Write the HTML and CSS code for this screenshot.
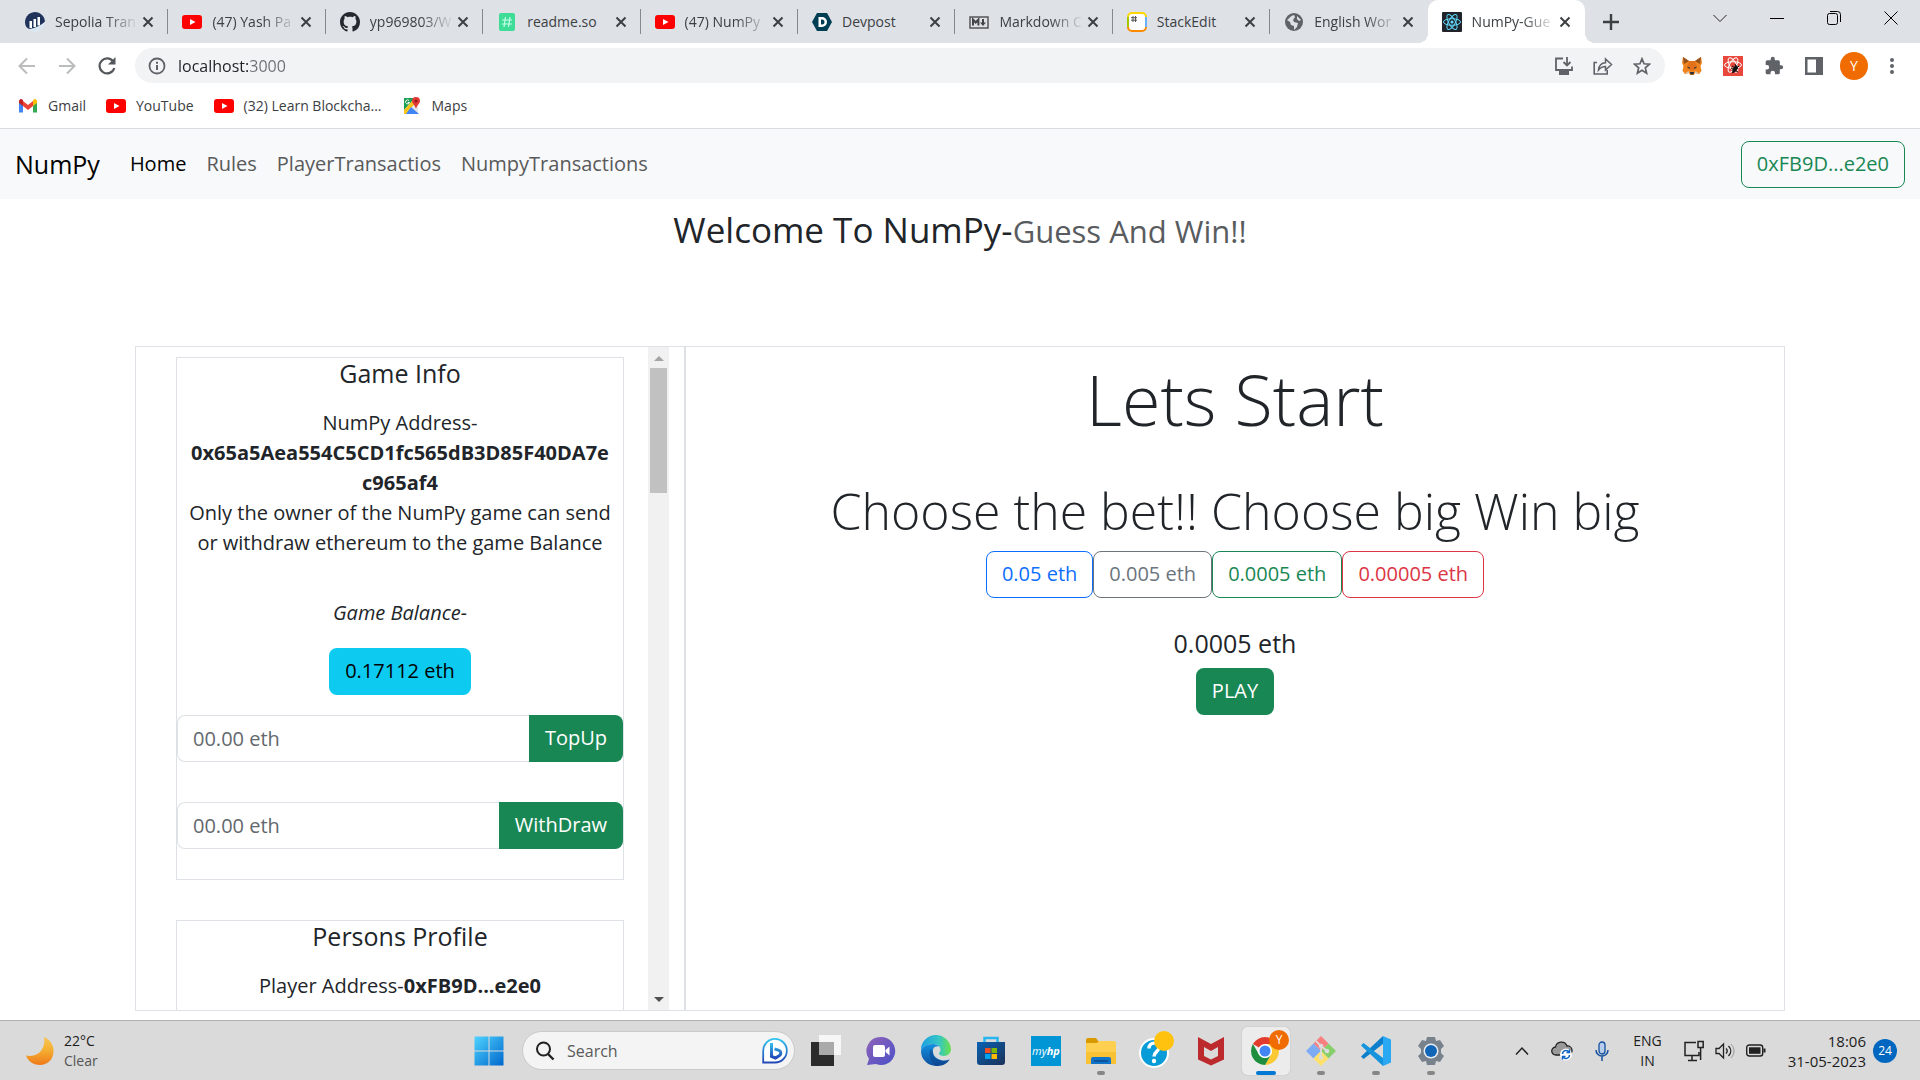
FILE: index.html
```html
<!DOCTYPE html>
<html lang="en">
<head>
  <meta charset="UTF-8">
  <meta name="viewport" content="width=device-width, initial-scale=1">
  <title>NumPy-Guess And Win</title>
  <link rel="stylesheet" href="styles.css">
</head>
<body>

  <!-- shared symbols -->
  <svg class="sprite" aria-hidden="true">
    <symbol id="i-close" viewBox="0 0 12 12"><path d="M1.5 1.5l9 9M10.5 1.5l-9 9" stroke="#3c4043" stroke-width="2" fill="none"/></symbol>
    <symbol id="i-youtube" viewBox="0 0 20 20"><rect y="3" width="20" height="14" rx="3" fill="#f00"/><path d="M8 7l5.500 3L8 13z" fill="#fff"/></symbol>
    <symbol id="i-chrome-y" viewBox="0 0 34 34">
      <path d="M16 17L3.900 10A14 14 0 0 1 28.100 10L16 10z" fill="#e33b2e"/>
      <path d="M28.100 10A14 14 0 0 1 16 31L22 20.500A7 7 0 0 0 16 10z" fill="#fcc934"/>
      <path d="M3.900 10A14 14 0 0 0 16 31L22 20.500A7 7 0 0 1 10 20.500z" fill="#1e8e3e"/>
      <circle cx="16" cy="17" r="7" fill="#fff"/><circle cx="16" cy="17" r="5.500" fill="#4285f4"/>
    </symbol>
  </svg>

  <header class="browser">
    <div class="tabstrip">
      <nav class="tabs" aria-label="Tabs">
        <div class="tab">
          <svg class="favicon" viewBox="0 0 20 20"><circle cx="10" cy="10" r="10" fill="#dbe8f2"/><path d="M1.200 14.800A10 10 0 1 1 20 9.500Q14 15.500 4.500 17Q2.500 16.500 1.200 14.800z" fill="#21325b"/><path d="M4.500 9h2.500v7H4.500zM8.500 7h2.500v8H8.500zM12.500 5H15v8.500h-2.500z" fill="#fff"/></svg>
          <a class="tab-title" href="#">Sepolia Tran</a>
          <button class="tab-close" aria-label="Close tab"><svg><use href="#i-close"/></svg></button>
        </div>
        <div class="tab">
          <svg class="favicon"><use href="#i-youtube"/></svg>
          <a class="tab-title" href="#">(47) Yash Pa</a>
          <button class="tab-close" aria-label="Close tab"><svg><use href="#i-close"/></svg></button>
        </div>
        <div class="tab">
          <svg class="favicon" viewBox="0 0 16 16"><path fill="#24292f" d="M8 0C3.580 0 0 3.580 0 8c0 3.540 2.290 6.530 5.470 7.590.4.070.55-.17.55-.38 0-.19-.01-.82-.01-1.490-2.010.37-2.530-.49-2.690-.94-.09-.23-.48-.94-.82-1.130-.28-.15-.68-.52-.01-.53.63-.01 1.080.58 1.230.82.72 1.210 1.870.87 2.330.66.07-.52.28-.87.51-1.070-1.780-.2-3.640-.89-3.640-3.950 0-.87.31-1.590.82-2.150-.08-.2-.36-1.020.08-2.120 0 0 .67-.21 2.200.82.64-.18 1.320-.27 2-.27s1.360.09 2 .27c1.530-1.040 2.200-.82 2.200-.82.44 1.100.16 1.920.08 2.120.51.56.82 1.270.82 2.150 0 3.070-1.870 3.750-3.650 3.950.29.25.54.73.54 1.480 0 1.070-.01 1.930-.01 2.200 0 .21.15.46.55.38A8.010 8.010 0 0 0 16 8c0-4.420-3.580-8-8-8z"/></svg>
          <a class="tab-title" href="#">yp969803/W</a>
          <button class="tab-close" aria-label="Close tab"><svg><use href="#i-close"/></svg></button>
        </div>
        <div class="tab">
          <svg class="favicon" viewBox="0 0 20 20"><rect x="2" y="1" width="16" height="18" rx="2" fill="#3ddc97"/><path d="M8.500 5L7 15M13 5l-1.500 10M5 8h10M5 12h10" stroke="#c8ffe9" stroke-width="1.200"/></svg>
          <a class="tab-title short" href="#">readme.so</a>
          <button class="tab-close" aria-label="Close tab"><svg><use href="#i-close"/></svg></button>
        </div>
        <div class="tab">
          <svg class="favicon"><use href="#i-youtube"/></svg>
          <a class="tab-title" href="#">(47) NumPy</a>
          <button class="tab-close" aria-label="Close tab"><svg><use href="#i-close"/></svg></button>
        </div>
        <div class="tab">
          <svg class="favicon" viewBox="0 0 20 20"><path d="M5 1h10l5 9-5 9H5l-5-9z" fill="#003e54"/><path d="M6.500 5H10a5 5 0 0 1 0 10H6.500zM9 7.500v5h1a2.500 2.500 0 0 0 0-5z" fill="#fff" fill-rule="evenodd"/></svg>
          <a class="tab-title short" href="#">Devpost</a>
          <button class="tab-close" aria-label="Close tab"><svg><use href="#i-close"/></svg></button>
        </div>
        <div class="tab">
          <svg class="favicon" viewBox="0 0 20 20"><rect x="1" y="5" width="18" height="11" fill="none" stroke="#555" stroke-width="1.500"/><path d="M4 13.500V7.500l2.700 3 2.700-3v6M14 7v5" stroke="#444" stroke-width="2" fill="none"/><path d="M11 10.500h6l-3 3.500z" fill="#444"/></svg>
          <a class="tab-title" href="#">Markdown C</a>
          <button class="tab-close" aria-label="Close tab"><svg><use href="#i-close"/></svg></button>
        </div>
        <div class="tab">
          <svg class="favicon" viewBox="0 0 20 20"><rect x="1" y="1" width="18" height="18" rx="4" fill="#fff"/><path d="M1 15V5" stroke="#a5c700" stroke-width="2"/><path d="M1 5a4 4 0 0 1 4-4h10a4 4 0 0 1 4 4" fill="none" stroke="#ffd700" stroke-width="2"/><path d="M19 5v10" stroke="#69b0ff" stroke-width="2"/><path d="M19 15a4 4 0 0 1-4 4H5a4 4 0 0 1-4-4" fill="none" stroke="#ff8a00" stroke-width="2"/><path d="M6 4v6M8.500 4v6M4 5.700h6M4 8.200h6" stroke="#555"/></svg>
          <a class="tab-title short" href="#">StackEdit</a>
          <button class="tab-close" aria-label="Close tab"><svg><use href="#i-close"/></svg></button>
        </div>
        <div class="tab tab-last">
          <svg class="favicon" viewBox="0 0 20 20"><circle cx="10" cy="10" r="9" fill="#5f6368"/><path d="M3 8c2-1 3-4 7-5l1 2-2 3 1 2 4 1-1 4-3 3v-4l-3-1-1-3z" fill="#dee1e6"/><path d="M13 4l4 4-2 1-2-2z" fill="#dee1e6"/></svg>
          <a class="tab-title" href="#">English Wor</a>
          <button class="tab-close" aria-label="Close tab"><svg><use href="#i-close"/></svg></button>
        </div>
        <div class="tab tab-active">
          <svg class="favicon" viewBox="0 0 20 20"><rect width="20" height="20" rx="1" fill="#20232a"/><g fill="none" stroke="#61dafb"><ellipse cx="10" cy="10" rx="8.500" ry="3.300"/><ellipse cx="10" cy="10" rx="8.500" ry="3.300" transform="rotate(60 10 10)"/><ellipse cx="10" cy="10" rx="8.500" ry="3.300" transform="rotate(120 10 10)"/></g><circle cx="10" cy="10" r="1.600" fill="#61dafb"/></svg>
          <a class="tab-title" href="#">NumPy-Gue</a>
          <button class="tab-close" aria-label="Close tab"><svg><use href="#i-close"/></svg></button>
        </div>
      </nav>
      <button class="icon-btn new-tab" aria-label="New tab"><svg width="16" height="16" viewBox="0 0 16 16"><path d="M8 0v16M0 8h16" stroke="#3c4043" stroke-width="2.400"/></svg></button>
      <div class="window-controls">
        <button class="icon-btn" aria-label="Search tabs"><svg width="16" height="16" viewBox="0 0 16 16"><path d="M1.500 5L8 11.500 14.500 5" fill="none" stroke="#222"/></svg></button>
        <button class="icon-btn" aria-label="Minimize"><svg width="14" height="14" viewBox="0 0 14 14"><path d="M0 7.500h14" stroke="#000"/></svg></button>
        <button class="icon-btn" aria-label="Restore"><svg width="14" height="14" viewBox="0 0 14 14"><rect x=".5" y="2.500" width="10" height="11" rx="2" fill="none" stroke="#000"/><path d="M3 .5h7.500a3 3 0 0 1 3 3V11" fill="none" stroke="#000"/></svg></button>
        <button class="icon-btn" aria-label="Close window"><svg width="14" height="14" viewBox="0 0 14 14"><path d="M.5.5l13 13M13.500.5l-13 13" stroke="#000"/></svg></button>
      </div>
    </div>

    <div class="toolbar">
      <button class="icon-btn" aria-label="Back"><svg width="18" height="18" viewBox="0 0 18 18"><path d="M17 9H2M9 1.500L1.500 9 9 16.500" fill="none" stroke="#babcbe" stroke-width="2"/></svg></button>
      <button class="icon-btn" aria-label="Forward"><svg width="18" height="18" viewBox="0 0 18 18"><path d="M1 9h15M9 1.500L16.500 9 9 16.500" fill="none" stroke="#babcbe" stroke-width="2"/></svg></button>
      <button class="icon-btn" aria-label="Reload"><svg width="18" height="18" viewBox="0 0 18 18"><path d="M15.500 5A7.500 7.500 0 1 0 16.300 11" fill="none" stroke="#55585c" stroke-width="2.200"/><path d="M17.500 0v7.500H10z" fill="#55585c"/></svg></button>
      <div class="omnibox">
        <svg width="18" height="18" viewBox="0 0 18 18"><circle cx="9" cy="9" r="7.500" fill="none" stroke="#5f6368" stroke-width="1.800"/><path d="M9 8v5M9 4.700v2" stroke="#5f6368" stroke-width="2"/></svg>
        <input class="url" type="text" aria-label="Address" value="localhost:3000">
        <button class="icon-btn" aria-label="Install app"><svg width="18" height="20" viewBox="0 0 18 20"><path d="M8 2.500H1V14h16v-3.500" fill="none" stroke="#5f6368" stroke-width="1.800"/><path d="M4 15h10v4H4z" fill="#5f6368"/><path d="M12 1v8.500M8.500 6l3.500 3.500L15.500 6" fill="none" stroke="#5f6368" stroke-width="1.800"/></svg></button>
        <button class="icon-btn" aria-label="Share"><svg width="20" height="18" viewBox="0 0 20 18"><path d="M4 5.500H1.200V17h13v-4" fill="none" stroke="#5f6368" stroke-width="1.600"/><path d="M5.500 13C6 8.500 8.500 6 12.500 5.800V2L18.500 7.500 12.500 13V9.500C9.500 9.500 7.500 10.500 5.500 13z" fill="none" stroke="#5f6368" stroke-width="1.500"/></svg></button>
        <button class="icon-btn" aria-label="Bookmark this page"><svg width="18" height="18" viewBox="0 0 20 20"><path d="M10 2l2.300 5.500 6 .5-4.600 4 1.400 6L10 14.800 4.900 18l1.400-6L1.700 8l6-.5z" fill="none" stroke="#5f6368" stroke-width="1.900"/></svg></button>
      </div>
      <div class="extensions">
        <button class="icon-btn" aria-label="MetaMask"><svg width="20" height="20" viewBox="0 0 20 20"><path d="M1 1l6 4h6l6-4 1 6-1.500 3L19.500 15 17 18l-4-1-1 2H8l-1-2-4 1-2.500-3L1.500 10 0 7z" fill="#f0851f"/><path d="M1 1l6 4-5 3zM19 1l-6 4 5 3z" fill="#92501f"/><path d="M7 5h6l2 7-5 3-5-3z" fill="#e2711a"/><path d="M4.500 10.500l3.500 1-.5 1.500zM15.500 10.500l-3.500 1 .5 1.500z" fill="#233447"/><path d="M8 16h4l-.5 2.500h-3z" fill="#2a3038"/><path d="M3 17l4-2v2zM17 17l-4-2v2z" fill="#d7c1b3"/></svg></button>
        <button class="icon-btn" aria-label="React Developer Tools"><svg width="20" height="20" viewBox="0 0 20 20"><rect width="20" height="20" fill="#e8473c"/><g fill="none" stroke="#fff"><ellipse cx="10" cy="9" rx="8.500" ry="3.300"/><ellipse cx="10" cy="9" rx="8" ry="3.300" transform="rotate(60 10 9)"/><ellipse cx="10" cy="9" rx="8" ry="3.300" transform="rotate(120 10 9)"/></g><ellipse cx="12" cy="13" rx="2" ry="4" transform="rotate(30 12 13)" fill="#111"/><path d="M8 12l7 4M9 17l6-5M12 8l1 3M9 10l3 2M16 10l-2 2" stroke="#111"/></svg></button>
        <button class="icon-btn" aria-label="Extensions"><svg width="20" height="20" viewBox="0 0 24 24"><path d="M20.500 11H19V7a2 2 0 0 0-2-2h-4V3.500a2.500 2.500 0 0 0-5 0V5H4a2 2 0 0 0-2 2v3.800h1.500a2.700 2.700 0 0 1 0 5.400H2V20a2 2 0 0 0 2 2h3.800v-1.500a2.700 2.700 0 0 1 5.400 0V22H17a2 2 0 0 0 2-2v-4h1.500a2.500 2.500 0 0 0 0-5z" fill="#5f6368"/></svg></button>
        <button class="icon-btn" aria-label="Side panel"><svg width="18" height="18" viewBox="0 0 18 18"><path d="M0 0h18v18H0zM2.500 2.500v13H11v-13z" fill="#5f6368" fill-rule="evenodd"/></svg></button>
        <button class="avatar">Y</button>
        <button class="icon-btn" aria-label="Menu"><svg width="4" height="16" viewBox="0 0 4 16"><g fill="#5f6368"><circle cx="2" cy="2" r="2"/><circle cx="2" cy="8" r="2"/><circle cx="2" cy="14" r="2"/></g></svg></button>
      </div>
    </div>

    <div class="bookmarks">
      <a href="#"><svg class="favicon" viewBox="0 0 20 20"><path d="M1 5v11.500h4V8z" fill="#4285f4"/><path d="M15 8v8.500h4V5z" fill="#34a853"/><path d="M5 5v5l5 4 5-4V5l-5 4z" fill="#ea4335"/><path d="M1 5a2 2 0 0 1 3.300-1.500L5 4v6L1 7z" fill="#c5221f"/><path d="M19 5a2 2 0 0 0-3.300-1.500L15 4v6l4-3z" fill="#fbbc04"/></svg>Gmail</a>
      <a href="#"><svg class="favicon"><use href="#i-youtube"/></svg>YouTube</a>
      <a href="#"><svg class="favicon"><use href="#i-youtube"/></svg>(32) Learn Blockcha...</a>
      <a href="#"><svg class="favicon" viewBox="0 0 20 20"><path d="M2 2h14v16H2z" fill="#e3e6ea"/><path d="M2 2h11L2 14z" fill="#1e9e54"/><path d="M2 14L13 2l2 3L4 18H2z" fill="#f8c41b"/><path d="M9 11l8 7H4z" fill="#4285f4"/><path d="M14 1a4 4 0 0 1 4 4c0 2.500-3 4-4 8-1-4-4-5.500-4-8a4 4 0 0 1 4-4z" fill="#e53935"/><circle cx="14" cy="5" r="1.500" fill="#8c1d18"/><path d="M7 4.500a2 2 0 1 0 .5 2H5.700" fill="none" stroke="#fff"/></svg>Maps</a>
    </div>
  </header>

  <nav class="navbar">
    <a class="navbar-brand" href="#">NumPy</a>
    <a class="nav-link active" href="#">Home</a>
    <a class="nav-link" href="#">Rules</a>
    <a class="nav-link" href="#">PlayerTransactios</a>
    <a class="nav-link" href="#">NumpyTransactions</a>
    <button class="btn btn-outline-success wallet">0xFB9D...e2e0</button>
  </nav>

  <main class="page">
    <h3 class="welcome">Welcome To NumPy-<small>Guess And Win!!</small></h3>

    <div class="game">
      <section class="side">
        <div class="side-scroll">
          <div class="card">
            <h5>Game Info</h5>
            <div class="card-text">
              NumPy Address-<b>0x65a5Aea554C5CD1fc565dB3D85F40DA7ec965af4</b><br>
              Only the owner of the NumPy game can send or withdraw ethereum to the game Balance
            </div>
            <p class="balance"><i>Game Balance-</i></p>
            <button class="btn btn-info">0.17112 eth</button>
            <form class="input-group">
              <input type="text" aria-label="Top up amount" placeholder="00.00 eth">
              <button type="button" class="btn btn-success">TopUp</button>
            </form>
            <form class="input-group">
              <input type="text" aria-label="Withdraw amount" placeholder="00.00 eth">
              <button type="button" class="btn btn-success">WithDraw</button>
            </form>
          </div>
          <div class="card">
            <h5>Persons Profile</h5>
            <div class="card-text">Player Address-<b>0xFB9D...e2e0</b></div>
          </div>
        </div>
        <div class="scrollbar">
          <span class="arrow-up"></span>
          <span class="thumb"></span>
          <span class="arrow-down"></span>
        </div>
      </section>

      <section class="play">
        <h1 class="display-4">Lets Start</h1>
        <h2 class="display-6">Choose the bet!! Choose big Win big</h2>
        <div class="bets">
          <button class="btn btn-outline-primary">0.05 eth</button>
          <button class="btn btn-outline-secondary">0.005 eth</button>
          <button class="btn btn-outline-success">0.0005 eth</button>
          <button class="btn btn-outline-danger">0.00005 eth</button>
        </div>
        <h5 class="chosen">0.0005 eth</h5>
        <button class="btn btn-success">PLAY</button>
      </section>
    </div>
  </main>

  <footer class="taskbar">
    <div class="weather">
      <svg width="28" height="30" viewBox="0 0 28 30"><defs><linearGradient id="moon" x2="0" y2="1"><stop offset="0" stop-color="#f7c75b"/><stop offset=".45" stop-color="#f4b032"/><stop offset="1" stop-color="#ef7a1a"/></linearGradient></defs><path d="M18 1C25 4 28 10 27.500 16 27 24 21 29 14 29 7 29 2 25 0 19.500 12 22 20 13 18 1z" fill="url(#moon)"/></svg>
      <div>22°C<br><span>Clear</span></div>
    </div>

    <div class="apps">
      <button class="app" aria-label="Start"><svg width="30" height="30" viewBox="0 0 30 30"><defs><linearGradient id="win" x2="1" y2="1"><stop offset="0" stop-color="#4fd3ff"/><stop offset="1" stop-color="#0067cc"/></linearGradient></defs><path d="M1 .5h13.500v14H.5V1zM15.500.5h14v14h-14zM.5 15.500h14v14H.5zM15.500 15.500h14v14h-14z" fill="url(#win)"/></svg></button>
      <label class="search">
        <svg width="20" height="20" viewBox="0 0 20 20"><circle cx="8.500" cy="8" r="6.500" fill="none" stroke="#222" stroke-width="2"/><path d="M13 13l5.500 5.500" stroke="#222" stroke-width="2.400"/></svg>
        <input type="text" placeholder="Search" aria-label="Search">
        <svg width="26" height="26" viewBox="0 0 26 26"><defs><linearGradient id="bing" x2="0" y2="1"><stop offset="0" stop-color="#31c4ee"/><stop offset="1" stop-color="#2348b8"/></linearGradient></defs><path d="M1.200 24.500V13A11.800 11.800 0 1 1 13 24.500z" fill="#fff" stroke="url(#bing)" stroke-width="1.800"/><path d="M9.500 5v13.500l4 1.500 4-2.500c2-1.500 1.500-4.500-.5-5.200l-4.500-1.500" fill="none" stroke="url(#bing)" stroke-width="3"/></svg>
      </label>
      <button class="app" aria-label="Task view"><svg width="30" height="34" viewBox="0 0 30 34"><path d="M0 8h23v24H0z" fill="#2b2b2b"/><path d="M8 1h22v20H8z" fill="#fff" fill-opacity=".75"/><path d="M8 8h15v13H8z" fill="#aaa"/></svg></button>
      <button class="app" aria-label="Chat"><svg width="30" height="30" viewBox="0 0 30 30"><defs><linearGradient id="chat" x2="1" y2="1"><stop offset="0" stop-color="#9063b8"/><stop offset="1" stop-color="#4a50c8"/></linearGradient></defs><path d="M15 1a14 14 0 1 1-5 27L1 29l2-6A14 14 0 0 1 15 1z" fill="url(#chat)"/><rect x="7" y="9" width="12" height="12" rx="2" fill="#fff"/><path d="M19.500 14l4-3.500v9l-4-3.500z" fill="#fff"/></svg></button>
      <button class="app" aria-label="Edge"><svg width="32" height="32" viewBox="0 0 32 32"><defs><linearGradient id="edge1" x2="1"><stop offset="0" stop-color="#1b9de2"/><stop offset=".6" stop-color="#35c7c4"/><stop offset="1" stop-color="#6be04b"/></linearGradient><linearGradient id="edge2" x2="0" y2="1"><stop offset="0" stop-color="#1490df"/><stop offset="1" stop-color="#0b4f9e"/></linearGradient></defs><path d="M1 16A15 15 0 0 1 31 14c0 4-3 7-7 7-3 0-5-1-5-2.500 0-1 1.500-1.500 1.500-4C20.500 11 17 9 13 9 7 9 2 12 1 16z" fill="url(#edge1)"/><path d="M1 16C2 12 7 9 13 9c3 0 5 1 6.500 2.500-6-1-7 3-6.500 6C14 23 20 26 26 25.500c1.500-.2 3-1.500 3.500-1C27 29 22 31 16 31A15 15 0 0 1 1 16z" fill="url(#edge2)"/><path d="M11 14c-3 4-1 13 5 17 6 0 11-2 13.500-6.500-7 3.500-18 .5-16.500-8z" fill="#0a3f87" fill-opacity=".5"/></svg></button>
      <button class="app" aria-label="Store"><svg width="30" height="30" viewBox="0 0 30 30"><defs><linearGradient id="store" x2="1" y2="1"><stop offset="0" stop-color="#0a63b4"/><stop offset="1" stop-color="#1b3157"/></linearGradient></defs><path d="M8.500 7V2h13v5" fill="none" stroke="#29b6f0" stroke-width="2.500"/><path d="M1 6h28v20a3 3 0 0 1-3 3H4a3 3 0 0 1-3-3z" fill="url(#store)"/><path d="M9 12h5.500v5H9z" fill="#f25022"/><path d="M15.500 12H21v5h-5.500z" fill="#7fba00"/><path d="M9 18h5.500v5H9z" fill="#00a4ef"/><path d="M15.500 18H21v5h-5.500z" fill="#ffb900"/></svg></button>
      <button class="app"><span class="myhp">my<b>hp</b></span></button>
      <button class="app running" aria-label="File Explorer"><svg width="30" height="30" viewBox="0 0 30 30"><path d="M0 4a2 2 0 0 1 2-2h8l3 4v6H0z" fill="#d99a00"/><path d="M0 7h11l2-2h15a2 2 0 0 1 2 2v21H0z" fill="#ffd04f"/><path d="M0 16h30v12H0z" fill="#f9c234"/><path d="M5 28v-5a2 2 0 0 1 2-2h16a2 2 0 0 1 2 2v5z" fill="#1173c7"/><path d="M8 25h14" stroke="#084a8f" stroke-width="1.500"/></svg></button>
      <button class="app" aria-label="Help"><svg width="36" height="40" viewBox="0 0 36 40"><circle cx="16" cy="22" r="14" fill="#079bd8" stroke="#fff" stroke-width="2"/><path d="M11 17.500c0-7 10-7 10-1 0 4-5 4-5 9" fill="none" stroke="#fff" stroke-width="3.500"/><circle cx="16" cy="30" r="2.200" fill="#fff"/><circle cx="26" cy="10" r="10" fill="#ffc20e"/></svg></button>
      <button class="app" aria-label="McAfee"><svg width="28" height="30" viewBox="0 0 28 30"><path d="M1 1l13 7 13-7v22.500L14 29.500 1 23.500zM7 11v9l7 3.500 7-3.500v-9l-7 4z" fill="#bd2a2e" fill-rule="evenodd"/></svg></button>
      <button class="app app-active" aria-label="Chrome"><svg width="34" height="34"><use href="#i-chrome-y"/></svg><span class="profile">Y</span></button>
      <button class="app running" aria-label="Git"><svg width="30" height="30" viewBox="0 0 30 30"><path d="M15 0l7.500 7.500L15 15 7.500 7.500z" fill="#f77f7f"/><path d="M7.500 7.500L15 15l-7.500 7.500L0 15z" fill="#7dacf5"/><path d="M22.500 7.500L30 15l-7.500 7.500L15 15z" fill="#86cf6a"/><path d="M15 15l7.500 7.500L15 30l-7.500-7.500z" fill="#ffe06b"/><path d="M10 5l5 5v12M15 10l6 5" fill="none" stroke="#dcdcdc" stroke-width="1.800"/><g fill="#dcdcdc"><circle cx="15" cy="10" r="2.300"/><circle cx="15" cy="21.500" r="2.300"/><circle cx="21" cy="15" r="2.300"/></g></svg></button>
      <button class="app running" aria-label="Visual Studio Code"><svg width="30" height="30" viewBox="0 0 30 30"><path d="M22 0L0 20.500 2.500 23 22 8z" fill="#0b7fcb"/><path d="M22 30L0 9.500 2.500 7 22 22z" fill="#1593dd"/><path d="M22 0l8 3.500v23L22 30z" fill="#2aa9f2"/></svg></button>
      <button class="app running" aria-label="Settings"><svg width="30" height="30" viewBox="0 0 30 30"><path d="M11 1h8l1 4 4-1 4 6-3 3v4l3 3-4 6-4-1-1 4h-8l-1-4-4 1-4-6 3-3v-4l-3-3 4-6 4 1z" fill="#78828d"/><circle cx="15" cy="15" r="7.500" fill="#e9edf2"/><circle cx="15" cy="15" r="6" fill="#1166b8"/></svg></button>
    </div>

    <div class="tray">
      <button class="icon-btn" aria-label="Hidden icons"><svg width="14" height="10" viewBox="0 0 14 10"><path d="M1 8.500L7 2l6 6.500" fill="none" stroke="#222" stroke-width="1.500"/></svg></button>
      <button class="icon-btn" aria-label="OneDrive"><svg width="22" height="20" viewBox="0 0 22 20"><path d="M5 14a4 4 0 0 1-.5-8A6 6 0 0 1 16 5a4.500 4.500 0 0 1 1 9z" fill="#9a9a9a" stroke="#222" stroke-width="1.300"/><circle cx="15" cy="13.500" r="6" fill="#fff"/><path d="M11.500 13a3.600 3.600 0 0 1 6.500-2M18.500 14a3.600 3.600 0 0 1-6.500 2M18.500 8.500v3h-3M11.500 18.500v-3h3" fill="none" stroke="#0a64c4" stroke-width="1.400"/></svg></button>
      <button class="icon-btn" aria-label="Microphone"><svg width="14" height="20" viewBox="0 0 14 20"><rect x="4" y="1" width="6" height="12" rx="3" fill="#b8cdea" stroke="#1550a0" stroke-width="1.300"/><path d="M1 9a6 6 0 0 0 12 0M7 15.500V20" fill="none" stroke="#1550a0" stroke-width="1.500"/></svg></button>
      <div class="lang">ENG<br>IN</div>
      <button class="icon-btn quick" aria-label="Network, volume, battery">
        <svg width="20" height="22" viewBox="0 0 20 22"><path d="M12 2.500H1v13h14V12M8 15.500V20M4 20.500h9" fill="none" stroke="#222" stroke-width="1.500"/><path d="M14 1.500h5.200v6H14zM16.600 8v12" fill="none" stroke="#222" stroke-width="1.500"/></svg>
        <svg width="20" height="18" viewBox="0 0 20 18"><path d="M1 6.500h3L8.500 2v14L4 11.500H1zM11 6.500c1.500 1.500 1.500 3.500 0 5M13.500 4c3 3 3 7 0 10" fill="none" stroke="#222" stroke-width="1.300"/><path d="M16 2c4 4 4 10 0 14" fill="none" stroke="#999"/></svg>
        <svg width="20" height="14" viewBox="0 0 20 14"><rect x=".7" y="1" width="16" height="11" rx="2.500" fill="none" stroke="#222" stroke-width="1.400"/><rect x="3" y="3.300" width="11.500" height="6.500" fill="#222"/><path d="M18.500 4.500v4" stroke="#222" stroke-width="2"/></svg>
      </button>
      <div class="clock">18:06<br>31-05-2023</div>
      <span class="count">24</span>
    </div>
  </footer>

</body>
</html>
```

FILE: styles.css
```css
* { box-sizing: border-box; }
body {
  margin: 0;
  height: 100vh;
  display: flex;
  flex-direction: column;
  font-family: "Open Sans", "Noto Sans", sans-serif;
  font-size: 20px;
  line-height: 30px;
  color: #212529;
  background: #fff;
}
h1, h2, h3, h5, p { margin: 0; }
h3, h5 { font-weight: 500; }
a { color: inherit; text-decoration: none; }
button, input { font: inherit; color: inherit; }
svg { display: block; flex: none; }
.sprite { position: absolute; width: 0; height: 0; }

/* browser */
.browser { font-size: 14px; line-height: 20px; color: #3c4043; border-bottom: 1px solid #d9dbde; }
.icon-btn { display: flex; align-items: center; justify-content: center; padding: 0; border: 0; background: none; }
.favicon { width: 20px; height: 20px; }

.tabstrip { display: flex; height: 43px; padding-left: 11px; background: #dee1e6; }
.tabs { display: grid; grid-template-columns: repeat(10, 1fr); flex: 0 1 1574px; }
.tab { position: relative; display: flex; align-items: center; min-width: 0; padding: 0 11px 0 14px; }
.tab::after { content: ""; position: absolute; right: 0; top: 9px; width: 1px; height: 25px; background: #85888c; }
.tab-title {
  flex: 1;
  min-width: 0;
  margin-left: 10px;
  overflow: hidden;
  white-space: nowrap;
  -webkit-mask-image: linear-gradient(to right, #000 60%, transparent);
  mask-image: linear-gradient(to right, #000 60%, transparent);
}
.tab-title.short { -webkit-mask-image: none; mask-image: none; }
.tab-close { padding: 3px; border: 0; background: none; }
.tab-close svg { width: 12px; height: 12px; }
.tab-last::after { display: none; }
.tab-active { background: #fff; border-radius: 10px 10px 0 0; }
.tab-active::before, .tab-active::after { content: ""; position: absolute; top: auto; bottom: 0; width: 10px; height: 10px; }
.tab-active::before { left: -10px; background: radial-gradient(circle at 0 0, #dee1e6 10px, #fff 10px); }
.tab-active::after { right: -10px; background: radial-gradient(circle at 100% 0, #dee1e6 10px, #fff 10px); }
.new-tab { width: 52px; }
.window-controls { display: flex; height: 36px; margin-left: auto; padding-right: 1px; }
.window-controls .icon-btn { width: 57px; }

.toolbar { display: flex; align-items: center; height: 44px; padding: 1px 18px 0; }
.toolbar > .icon-btn { width: 18px; margin-right: 22px; }
.toolbar > .icon-btn:nth-child(3) { margin-right: 19px; }
.omnibox { flex: 1; display: flex; align-items: center; gap: 20px; height: 35px; padding: 0 14px 0 13px; margin-right: 17px; border-radius: 18px; background: #f1f3f4; }
.url {
  flex: 1;
  min-width: 0;
  margin-left: -8px;
  padding: 0;
  border: 0;
  outline: 0;
  font-size: 16px;
  color: transparent;
  background: linear-gradient(to right, #202124 72px, #6b6f73 72px);
  -webkit-background-clip: text;
  background-clip: text;
}
.extensions { display: flex; align-items: center; gap: 21px; }
.extensions .icon-btn:last-child { width: 20px; margin-left: -3px; }
.avatar { width: 28px; height: 28px; margin: 0 -4px; padding: 0; border: 0; border-radius: 50%; background: #f06c00; color: #fff; }

.bookmarks { display: flex; align-items: center; gap: 20px; height: 41px; padding: 0 18px 3px; }
.bookmarks a { display: flex; align-items: center; gap: 10px; }

/* navbar */
.navbar { display: flex; align-items: center; height: 70px; padding: 0 15px; background: #f8f9fa; }
.navbar-brand { margin-right: 20px; font-size: 25px; color: #000; }
.nav-link { padding: 10px; color: #595a5b; }
.nav-link.active { color: #000; }
.wallet { margin-left: auto; }

.btn { padding: 7px 15px 8px; border: 1px solid transparent; border-radius: 8px; background: none; line-height: 30px; }
.btn-success { background: #198754; color: #fff; }
.btn-info { background: #0dcaf0; color: #000; }
.btn-outline-primary { border-color: #0d6efd; color: #0d6efd; }
.btn-outline-secondary { border-color: #6c757d; color: #6c757d; }
.btn-outline-success { border-color: #198754; color: #198754; }
.btn-outline-danger { border-color: #dc3545; color: #dc3545; }

/* game */
.page { flex: 1; min-height: 0; display: flex; flex-direction: column; padding: 10px 0 9px; }
.welcome { margin-bottom: 94px; font-size: 35px; line-height: 42px; text-align: center; }
.welcome small { font-size: 31px; font-weight: 400; color: #595c5f; }
.game { flex: 1; min-height: 0; display: grid; grid-template-columns: 1fr 2fr; width: 100%; max-width: 1650px; margin: 0 auto; text-align: center; }
.side, .play { min-width: 0; min-height: 0; border: 1px solid #dee2e6; }
.side { display: flex; gap: 24px; padding: 0 15px 0 40px; }
.side-scroll { flex: 1; min-width: 0; overflow: hidden; padding-top: 10px; }

.card { margin-bottom: 40px; padding-bottom: 30px; border: 1px solid #dee2e6; }
.card h5, .chosen { font-size: 25px; line-height: 30px; }
.card h5 { margin-bottom: 20px; }
.card-text { padding: 0 10px; overflow-wrap: break-word; }
.balance { margin: 40px 0 20px; }
.input-group { display: flex; margin-top: 20px; }
.input-group + .input-group { margin-top: 40px; }
.input-group input { flex: 1; min-width: 0; padding: 0 15px; border: 1px solid #dee2e6; border-right: 0; border-radius: 8px 0 0 8px; }
.input-group input::placeholder { color: #63686d; opacity: 1; }
.input-group .btn { border-radius: 0 8px 8px 0; }

.scrollbar { display: flex; flex-direction: column; align-items: center; width: 21px; padding: 9px 0 8px; background: #f1f1f1; }
.thumb { width: 17px; height: 125px; margin-top: 7px; background: #c1c1c1; }
.arrow-up, .arrow-down { border: 5px solid transparent; }
.arrow-up { border-top: 0; border-bottom-color: #a3a3a3; }
.arrow-down { margin-top: auto; border-bottom: 0; border-top-color: #505050; }

.play { padding-top: 10px; }
.display-4 { margin-bottom: 40px; font-size: 70px; font-weight: 300; line-height: 84px; }
.display-6 { margin-bottom: 10px; font-size: 50px; font-weight: 300; line-height: 60px; }
.bets { display: flex; justify-content: center; }
.chosen { margin: 30px 0 10px; }

/* taskbar */
.taskbar { display: grid; grid-template-columns: 1fr auto 1fr; align-items: center; height: 60px; border-top: 1px solid #b0b0b0; background: #dadada; font-size: 14px; line-height: 20px; color: #1c1c1c; }
.weather { display: flex; align-items: center; gap: 10px; padding-left: 26px; }
.weather span { color: #555; }
.apps { display: flex; align-items: center; gap: 7px; }
.app { position: relative; display: flex; align-items: center; justify-content: center; width: 48px; height: 48px; padding: 0; border: 0; border-radius: 5px; background: none; }
.app-active { background: #ececec; box-shadow: 0 0 1px #999; }
.running::after, .app-active::after { content: ""; position: absolute; bottom: 0; width: 8px; height: 4px; border-radius: 2px; background: #868686; }
.app-active::after { width: 20px; background: #0078d4; }
.profile { position: absolute; top: 3px; right: 1px; width: 20px; height: 20px; border-radius: 50%; background: #f06c00; color: #fff; font-size: 12px; }
.myhp { width: 30px; height: 30px; background: #0096d6; color: #fff; font-size: 11px; line-height: 30px; font-style: italic; }
.search { display: flex; align-items: center; gap: 12px; width: 273px; height: 39px; margin-left: 2px; padding: 0 6px 0 12px; border: 1px solid #c9c9c9; border-radius: 20px; background: #f4f4f4; }
.search input { flex: 1; min-width: 0; padding: 0; border: 0; background: none; font-size: 16px; }
.search input::placeholder { color: #5a5a5a; opacity: 1; }
.tray { display: flex; align-items: center; justify-content: flex-end; gap: 22px; padding-right: 23px; }
.lang { margin-left: 2px; text-align: center; }
.quick { gap: 11px; }
.clock { margin-right: -15px; font-size: 15px; text-align: right; }
.count { width: 24px; height: 24px; border-radius: 50%; background: #0067c0; color: #fff; font-size: 12px; line-height: 24px; text-align: center; }
```
